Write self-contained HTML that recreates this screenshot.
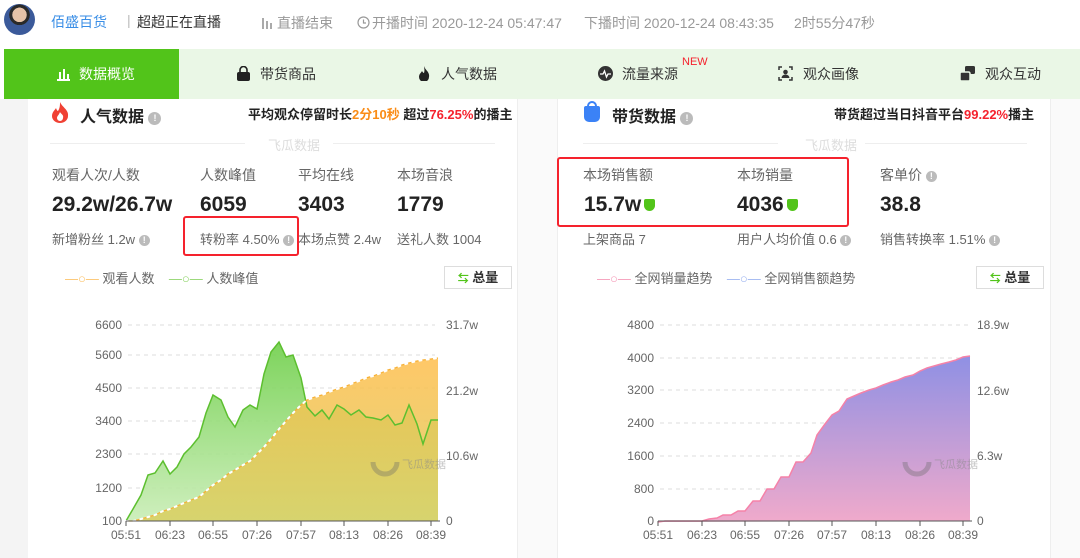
<!DOCTYPE html><html><head><meta charset="utf-8"><style>
*{margin:0;padding:0;box-sizing:border-box}
body{width:1080px;height:558px;overflow:hidden;background:#fff;font-family:"Liberation Sans","Noto Sans CJK SC",sans-serif;position:relative;color:#333}
.a{position:absolute;white-space:nowrap}
.g{color:#999;font-size:14px}
.lb{font-size:14px;color:#666}
.v{font-size:21px;font-weight:bold;color:#222}
.s{font-size:13px;color:#666}
.i{display:inline-block;width:11px;height:11px;border-radius:50%;background:#bbb;color:#fff;font-size:9px;line-height:11px;text-align:center;font-weight:bold;vertical-align:1px}
.tab{position:absolute;top:49px;height:50px;line-height:50px;font-size:14px;color:#333}
.ic{position:absolute;top:66px;width:15px;height:15px}
.ck{display:inline-block;width:11px;height:12px;background:#52c41a;border-radius:2px 2px 6px 6px;vertical-align:0px;margin-left:3px}
</style></head><body>
<div class="a" style="left:0;top:99px;width:28px;height:459px;background:#f4f4f4"></div>
<div class="a" style="left:517px;top:99px;width:41px;height:459px;background:#fafafa;border-left:1px solid #eee;border-right:1px solid #eee"></div>
<div class="a" style="left:1050px;top:99px;width:30px;height:459px;background:#fafafa;border-left:1px solid #eee"></div>
<!-- header -->
<div class="a" style="left:4px;top:4px;width:31px;height:31px;border-radius:50%;background:radial-gradient(circle at 50% 35%,#e6c3a8 0 28%,#2a2a2a 29% 40%,#3b5a9a 41%);"></div>
<div class="a" style="left:51px;top:12px;font-size:14px;color:#3a8ee6">佰盛百货</div>
<div class="a" style="left:127px;top:12px;font-size:14px;color:#bbb">|</div>
<div class="a" style="left:137px;top:12px;font-size:14px;color:#333">超超正在直播</div>
<svg class="a" style="left:262px;top:16px" width="12" height="13"><rect x="0" y="2" width="2" height="11" fill="#aaa"/><rect x="4" y="5" width="2" height="8" fill="#aaa"/><rect x="8" y="7" width="2" height="6" fill="#aaa"/></svg>
<div class="a g" style="left:277px;top:13px">直播结束</div>
<svg class="a" style="left:357px;top:16px" width="13" height="13"><circle cx="6.5" cy="6.5" r="5.5" stroke="#999" stroke-width="1.2" fill="none"/><path d="M6.5 3.5v3.5h2.5" stroke="#999" stroke-width="1.2" fill="none"/></svg>
<div class="a g" style="left:372px;top:13px">开播时间 2020-12-24 05:47:47</div>
<div class="a g" style="left:584px;top:13px">下播时间 2020-12-24 08:43:35</div>
<div class="a g" style="left:794px;top:13px">2时55分47秒</div>
<!-- tabs -->
<div class="a" style="left:4px;top:49px;width:1076px;height:50px;background:#eaf7e6"></div>
<div class="a" style="left:4px;top:49px;width:175px;height:50px;background:#52c41a"></div>
<svg class="ic" style="left:56px"><rect x="1" y="13" width="13" height="2" fill="#fff"/><rect x="3" y="6" width="2" height="7" fill="#fff"/><rect x="7" y="3" width="2" height="10" fill="#fff"/><rect x="11" y="8" width="2" height="5" fill="#fff"/></svg>
<div class="tab" style="left:79px;color:#fff">数据概览</div>
<svg class="ic" style="left:236px"><path d="M4 6V4a3.5 3.5 0 0 1 7 0v2" stroke="#222" stroke-width="1.6" fill="none"/><rect x="1" y="6" width="13" height="9" rx="2" fill="#222"/></svg>
<div class="tab" style="left:260px">带货商品</div>
<svg class="ic" style="left:417px"><path d="M7 0C8 4 13 6 12 11a5 5 0 0 1-10 0C2 8 4 7 5 5 6 7 7 7 7 7 8 4 7 2 7 0Z" fill="#222"/></svg>
<div class="tab" style="left:441px">人气数据</div>
<svg class="ic" style="left:598px"><circle cx="7.5" cy="7.5" r="7.5" fill="#333"/><path d="M2 8h3l1.5-3 2 6 1.5-3h3" stroke="#fff" stroke-width="1.3" fill="none"/></svg>
<div class="tab" style="left:622px">流量来源</div>
<div class="a" style="left:682px;top:56px;font-size:11px;color:#f5222d">NEW</div>
<svg class="ic" style="left:778px"><path d="M1 4V1h3M11 1h3v3M14 11v3h-3M4 14H1v-3" stroke="#333" stroke-width="1.5" fill="none"/><circle cx="7.5" cy="6" r="2.3" fill="#333"/><path d="M3.5 12a4 3.5 0 0 1 8 0Z" fill="#333"/></svg>
<div class="tab" style="left:803px">观众画像</div>
<svg class="ic" style="left:960px"><rect x="5" y="0" width="10" height="8" rx="1.5" fill="#333"/><rect x="0" y="6" width="10" height="9" rx="1.5" fill="#333" stroke="#eaf7e6" stroke-width="1.5"/></svg>
<div class="tab" style="left:985px">观众互动</div>
<!-- left card -->
<svg class="a" style="left:52px;top:102px" width="17" height="21"><path d="M8 0C10 5 17 8 16 14a8 7 0 0 1-16 0C0 10 3 8 4 6 5 9 6 9 6 9 8 6 8 3 8 0Z" fill="#f04134"/><path d="M8 10c1 2 4 3 3 6a3 3 0 0 1-6 0c0-2 2-3 3-6Z" fill="#fff"/></svg>
<div class="a" style="left:80px;top:103px;font-size:16px;font-weight:bold;color:#222">人气数据 <span class="i" style="width:13px;height:13px;line-height:13px">!</span></div>
<div class="a" style="left:248px;top:104px;font-size:13px;font-weight:bold;color:#222">平均观众停留时长<span style="color:#fa8c16">2分10秒</span> 超过<span style="color:#f5222d">76.25%</span>的播主</div>
<div class="a" style="left:50px;top:143px;width:195px;height:1px;background:#eee"></div>
<div class="a" style="left:333px;top:143px;width:162px;height:1px;background:#eee"></div>
<div class="a" style="left:268px;top:135px;font-size:13px;color:#ddd">飞瓜数据</div>
<div class="a lb" style="left:52px;top:165px">观看人次/人数</div>
<div class="a lb" style="left:200px;top:165px">人数峰值</div>
<div class="a lb" style="left:298px;top:165px">平均在线</div>
<div class="a lb" style="left:397px;top:165px">本场音浪</div>
<div class="a v" style="left:52px;top:193px">29.2w/26.7w</div>
<div class="a v" style="left:200px;top:193px">6059</div>
<div class="a v" style="left:298px;top:193px">3403</div>
<div class="a v" style="left:397px;top:193px">1779</div>
<div class="a s" style="left:52px;top:229px">新增粉丝 1.2w <span class="i">!</span></div>
<div class="a s" style="left:200px;top:229px">转粉率 4.50% <span class="i">!</span></div>
<div class="a s" style="left:298px;top:229px">本场点赞 2.4w</div>
<div class="a s" style="left:397px;top:229px">送礼人数 1004</div>
<div class="a" style="left:183px;top:216px;width:116px;height:40px;border:2px solid #f5222d;border-radius:3px"></div>
<div class="a s" style="left:65px;top:268px"><span style="color:#fcc36a">—○—</span> 观看人数 &nbsp;&nbsp; <span style="color:#8fd46a">—○—</span> 人数峰值</div>
<div class="a" style="left:444px;top:266px;width:68px;height:23px;border:1px solid #ddd;font-size:13px;font-weight:bold;line-height:21px;text-align:center"><span style="color:#52c41a;font-size:11px">⇆</span> 总量</div>
<!-- right card -->
<div class="a" style="left:584px;top:106px;width:16px;height:16px;background:#3b82f6;border-radius:2px 2px 5px 5px"></div>
<div class="a" style="left:587px;top:101px;width:10px;height:9px;border:2px solid #3b82f6;border-bottom:none;border-radius:5px 5px 0 0"></div>
<div class="a" style="left:612px;top:103px;font-size:16px;font-weight:bold;color:#222">带货数据 <span class="i" style="width:13px;height:13px;line-height:13px">!</span></div>
<div class="a" style="left:834px;top:104px;font-size:13px;font-weight:bold;color:#222">带货超过当日抖音平台<span style="color:#f5222d">99.22%</span>播主</div>
<div class="a" style="left:583px;top:143px;width:195px;height:1px;background:#eee"></div>
<div class="a" style="left:865px;top:143px;width:162px;height:1px;background:#eee"></div>
<div class="a" style="left:805px;top:135px;font-size:13px;color:#ddd">飞瓜数据</div>
<div class="a lb" style="left:583px;top:165px">本场销售额</div>
<div class="a lb" style="left:737px;top:165px">本场销量</div>
<div class="a lb" style="left:880px;top:165px">客单价 <span class="i">!</span></div>
<div class="a v" style="left:584px;top:193px">15.7w<span class="ck"></span></div>
<div class="a v" style="left:737px;top:193px">4036<span class="ck"></span></div>
<div class="a v" style="left:880px;top:193px">38.8</div>
<div class="a s" style="left:583px;top:229px">上架商品 7</div>
<div class="a s" style="left:737px;top:229px">用户人均价值 0.6 <span class="i">!</span></div>
<div class="a s" style="left:880px;top:229px">销售转换率 1.51% <span class="i">!</span></div>
<div class="a" style="left:557px;top:157px;width:292px;height:70px;border:2px solid #f5222d;border-radius:3px"></div>
<div class="a s" style="left:597px;top:268px"><span style="color:#f59ab8">—○—</span> 全网销量趋势 &nbsp;&nbsp; <span style="color:#9db4f0">—○—</span> 全网销售额趋势</div>
<div class="a" style="left:976px;top:266px;width:68px;height:23px;border:1px solid #ddd;font-size:13px;font-weight:bold;line-height:21px;text-align:center"><span style="color:#52c41a;font-size:11px">⇆</span> 总量</div>
<svg class="a" style="left:0;top:0" width="1080" height="558" font-family="Liberation Sans, sans-serif" font-size="12" fill="#666">
<defs>
<linearGradient id="gg" x1="0" y1="0" x2="0" y2="1"><stop offset="0" stop-color="#6fcf4a"/><stop offset="1" stop-color="#c9edb6"/></linearGradient>
<linearGradient id="og" x1="0" y1="0" x2="0" y2="1"><stop offset="0" stop-color="#ffbe4d"/><stop offset="1" stop-color="#d8cf60"/></linearGradient>
<linearGradient id="pg" x1="0" y1="0" x2="0" y2="1"><stop offset="0" stop-color="#8f90e4"/><stop offset="1" stop-color="#f0aacb"/></linearGradient>
</defs>
<g stroke="#ddd" stroke-dasharray="4,4">
<line x1="128" y1="325" x2="435" y2="325"/><line x1="128" y1="355" x2="435" y2="355"/><line x1="128" y1="388" x2="435" y2="388"/><line x1="128" y1="421" x2="435" y2="421"/><line x1="128" y1="454" x2="435" y2="454"/><line x1="128" y1="488" x2="435" y2="488"/>
<line x1="660" y1="325" x2="968" y2="325"/><line x1="660" y1="358" x2="968" y2="358"/><line x1="660" y1="390" x2="968" y2="390"/><line x1="660" y1="423" x2="968" y2="423"/><line x1="660" y1="456" x2="968" y2="456"/><line x1="660" y1="489" x2="968" y2="489"/>
</g>
<polygon fill="url(#gg)" opacity="0.9" points="126,521 133,509 141,495 148,475 155,473 163,461 170,474 177,467 184,454 191,447 199,437 206,413 213,395 221,400 228,417 235,427 243,410 250,405 257,409 264,374 271,352 279,342 286,357 293,355 301,378 307,407 315,416 322,410 329,419 337,405 344,409 351,415 359,410 366,417 373,418 381,420 388,415 395,425 402,423 409,405 417,424 423,444 431,420 438,420 438,521"/>
<polygon fill="url(#og)" opacity="0.85" points="126,521 133,521 141,519 148,517 155,515 163,511 170,509 177,506 184,503 191,500 199,497 206,491 213,485 221,480 228,474 235,470 243,465 250,461 257,454 264,447 271,439 279,429 286,421 293,413 301,405 307,400 315,397 322,395 329,392 337,389 344,387 351,384 359,381 366,378 373,376 381,373 388,370 395,368 402,365 409,363 417,361 423,360 431,359 438,358 438,521"/>
<polyline fill="none" stroke="#5cbf2f" stroke-width="1.5" points="126,521 133,509 141,495 148,475 155,473 163,461 170,474 177,467 184,454 191,447 199,437 206,413 213,395 221,400 228,417 235,427 243,410 250,405 257,409 264,374 271,352 279,342 286,357 293,355 301,378 307,407 315,416 322,410 329,419 337,405 344,409 351,415 359,410 366,417 373,418 381,420 388,415 395,425 402,423 409,405 417,424 423,444 431,420 438,420"/>
<polyline fill="none" stroke="#f7b035" stroke-width="1.2" points="126,521 133,521 141,519 148,517 155,515 163,511 170,509 177,506 184,503 191,500 199,497 206,491 213,485 221,480 228,474 235,470 243,465 250,461 257,454 264,447 271,439 279,429 286,421 293,413 301,405 307,400 315,397 322,395 329,392 337,389 344,387 351,384 359,381 366,378 373,376 381,373 388,370 395,368 402,365 409,363 417,361 423,360 431,359 438,358"/>
<polyline fill="none" stroke="#fff" stroke-width="2" stroke-dasharray="2,5.3" stroke-linecap="round" points="126,521 133,521 141,519 148,517 155,515 163,511 170,509 177,506 184,503 191,500 199,497 206,491 213,485 221,480 228,474 235,470 243,465 250,461 257,454 264,447 271,439 279,429 286,421 293,413 301,405 307,400 315,397 322,395 329,392 337,389 344,387 351,384 359,381 366,378 373,376 381,373 388,370 395,368 402,365 409,363 417,361 423,360 431,359 438,358"/>
<polygon fill="url(#pg)" points="658,522 665,521 673,521 680,521 687,521 695,521 702,521 709,519 717,518 723,515 731,515 738,511 745,511 753,501 760,501 767,489 774,489 781,477 789,477 796,462 803,462 811,453 817,435 825,424 832,415 839,411 847,399 854,396 861,393 869,390 876,388 883,385 891,382 898,380 905,377 913,375 920,371 927,368 934,366 941,364 949,362 956,360 963,357 970,356 970,521"/>
<polyline fill="none" stroke="#f582a8" stroke-width="1.5" points="658,522 665,521 673,521 680,521 687,521 695,521 702,521 709,519 717,518 723,515 731,515 738,511 745,511 753,501 760,501 767,489 774,489 781,477 789,477 796,462 803,462 811,453 817,435 825,424 832,415 839,411 847,399 854,396 861,393 869,390 876,388 883,385 891,382 898,380 905,377 913,375 920,371 927,368 934,366 941,364 949,362 956,360 963,357 970,356"/>
<line x1="126" y1="521" x2="440" y2="521" stroke="#555"/>
<line x1="658" y1="521" x2="972" y2="521" stroke="#555"/>
<g stroke="#555"><line x1="126" y1="521" x2="126" y2="526"/><line x1="170" y1="521" x2="170" y2="526"/><line x1="213" y1="521" x2="213" y2="526"/><line x1="257" y1="521" x2="257" y2="526"/><line x1="301" y1="521" x2="301" y2="526"/><line x1="344" y1="521" x2="344" y2="526"/><line x1="388" y1="521" x2="388" y2="526"/><line x1="431" y1="521" x2="431" y2="526"/>
<line x1="658" y1="521" x2="658" y2="526"/><line x1="702" y1="521" x2="702" y2="526"/><line x1="745" y1="521" x2="745" y2="526"/><line x1="789" y1="521" x2="789" y2="526"/><line x1="832" y1="521" x2="832" y2="526"/><line x1="876" y1="521" x2="876" y2="526"/><line x1="920" y1="521" x2="920" y2="526"/><line x1="963" y1="521" x2="963" y2="526"/></g>
<g text-anchor="end"><text x="122" y="329">6600</text><text x="122" y="359">5600</text><text x="122" y="392">4500</text><text x="122" y="425">3400</text><text x="122" y="458">2300</text><text x="122" y="492">1200</text><text x="122" y="525">100</text>
<text x="654" y="329">4800</text><text x="654" y="362">4000</text><text x="654" y="394">3200</text><text x="654" y="427">2400</text><text x="654" y="460">1600</text><text x="654" y="493">800</text><text x="654" y="525">0</text></g>
<text x="446" y="329">31.7w</text><text x="446" y="395">21.2w</text><text x="446" y="460">10.6w</text><text x="446" y="525">0</text>
<text x="977" y="329">18.9w</text><text x="977" y="395">12.6w</text><text x="977" y="460">6.3w</text><text x="977" y="525">0</text>
<g text-anchor="middle"><text x="126" y="539">05:51</text><text x="170" y="539">06:23</text><text x="213" y="539">06:55</text><text x="257" y="539">07:26</text><text x="301" y="539">07:57</text><text x="344" y="539">08:13</text><text x="388" y="539">08:26</text><text x="431" y="539">08:39</text>
<text x="658" y="539">05:51</text><text x="702" y="539">06:23</text><text x="745" y="539">06:55</text><text x="789" y="539">07:26</text><text x="832" y="539">07:57</text><text x="876" y="539">08:13</text><text x="920" y="539">08:26</text><text x="963" y="539">08:39</text></g>
<g opacity="0.35"><path d="M373 462a12 12 0 0 0 24 0" stroke="#666" stroke-width="5" fill="none"/><path d="M905 462a12 12 0 0 0 24 0" stroke="#666" stroke-width="5" fill="none"/></g>
<g fill="#888" opacity="0.5" font-size="11"><text x="402" y="468">飞瓜数据</text><text x="934" y="468">飞瓜数据</text></g>
</svg>
</body></html>
